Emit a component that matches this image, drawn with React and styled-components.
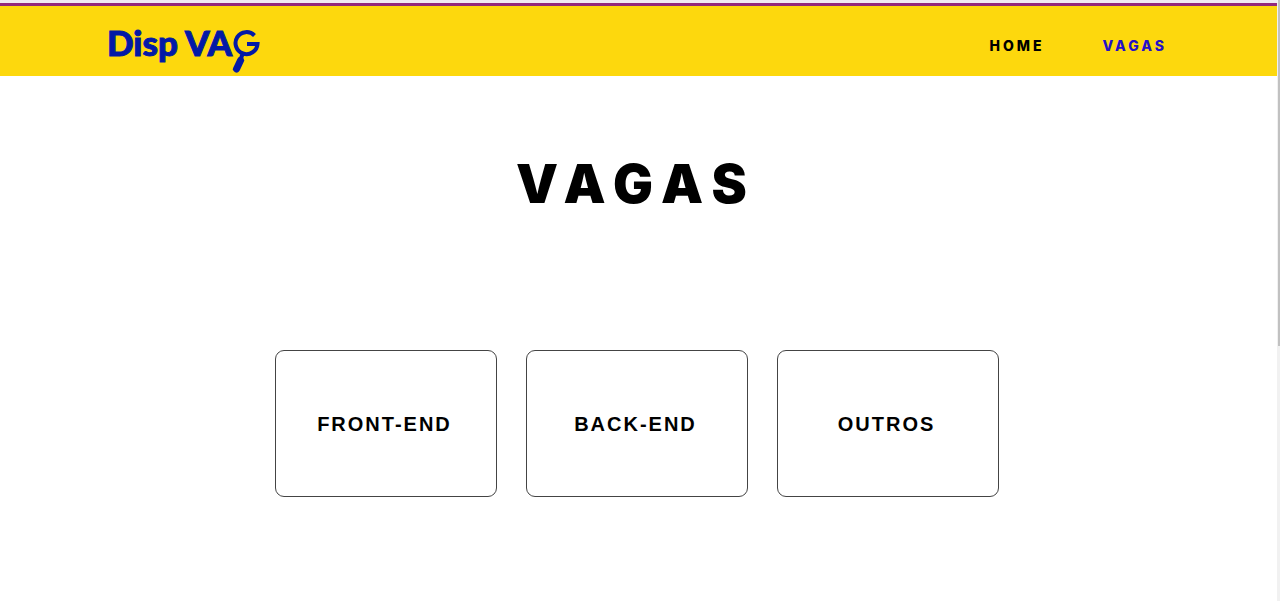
import React from 'react';
import styled, { createGlobalStyle } from 'styled-components';

const GlobalStyle = createGlobalStyle`
  * { box-sizing: border-box; }
  body {
    margin: 0;
    background: #fff;
    color: #000;
    font-family: Inter, "Liberation Sans", sans-serif;
  }
`;

const Page = styled.div`
  display: grid;
  grid-template-columns: minmax(0, 1fr) 3px;
  min-height: 100vh;
`;

const Content = styled.div`
  display: flex;
  flex-direction: column;
`;

const ScrollRail = styled.div`
  background: #f1f1f1;
`;

const ScrollThumb = styled.div`
  height: 346px;
  margin-left: 1px;
  background: #c1c1c1;
`;

const TopStrip = styled.div`
  height: 6px;
  background: #f0eaf4;
  border-bottom: 3px solid #93287c;
`;

const Header = styled.header`
  display: flex;
  align-items: flex-start;
  justify-content: space-between;
  height: 70px;
  padding: 20px 110px 0 107px;
  background: #fdd80d;
`;

const Logo = styled.a`
  display: flex;
  align-items: flex-start;
  color: #0319a6;
  font-family: Lato, sans-serif;
  font-size: 35px;
  font-weight: 900;
  line-height: 32px;
  text-decoration: none;
  white-space: pre;
  -webkit-text-stroke: 1px currentColor;
`;

const LogoLens = styled.svg`
  width: 30px;
  height: 48px;
`;

const Nav = styled.nav`
  display: flex;
  gap: 58px;
  padding-top: 10px;
`;

const NavLink = styled.a`
  color: ${({ $active }) => ($active ? '#2410c8' : '#000')};
  font-size: 14px;
  font-weight: 800;
  line-height: 20px;
  letter-spacing: 3px;
  text-decoration: none;
`;

const Main = styled.main`
  display: flex;
  flex-direction: column;
  align-items: center;
  padding: 76px 4px 104px 0;
`;

const Title = styled.h1`
  margin: 0;
  font-size: 53px;
  font-weight: 900;
  line-height: 64px;
  letter-spacing: 10px;
`;

const Categories = styled.section`
  display: flex;
  flex-wrap: wrap;
  justify-content: center;
  gap: 29px;
  margin-top: 134px;
`;

const CategoryButton = styled.button`
  width: 222px;
  height: 147px;
  padding: 2px 2px 0 0;
  border: 1px solid #444;
  border-radius: 9px;
  background: #fff;
  color: #000;
  font-family: "Liberation Sans", Arial, sans-serif;
  font-size: 20px;
  font-weight: 700;
  letter-spacing: 2px;
`;

const categories = ['FRONT-END', 'BACK-END', 'OUTROS'];

export default function App() {
  return (
    <Page>
      <GlobalStyle />
      <Content>
        <TopStrip />
        <Header>
          <Logo href="#home" aria-label="Disp VAG">
            Disp VA
            <LogoLens viewBox="0 0 30 48" fill="none" stroke="currentColor" aria-hidden="true">
              <path d="M22.500 9.500A11 11 0 1 0 25.500 18H15" strokeWidth="4" />
              <path d="M10.500 28L8.500 34" strokeWidth="4" />
              <path d="M8.500 34.500L4.500 43" strokeWidth="7" strokeLinecap="round" />
            </LogoLens>
          </Logo>
          <Nav>
            <NavLink href="#home">HOME</NavLink>
            <NavLink href="#vagas" $active aria-current="page">VAGAS</NavLink>
          </Nav>
        </Header>
        <Main>
          <Title>VAGAS</Title>
          <Categories>
            {categories.map((name) => (
              <CategoryButton key={name} type="button">{name}</CategoryButton>
            ))}
          </Categories>
        </Main>
      </Content>
      <ScrollRail>
        <ScrollThumb />
      </ScrollRail>
    </Page>
  );
}
